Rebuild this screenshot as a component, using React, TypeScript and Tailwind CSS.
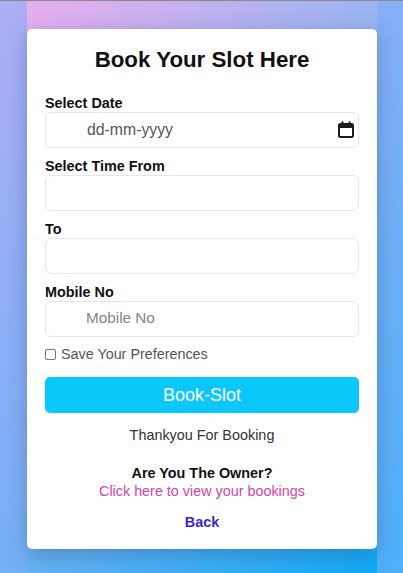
import React from "react";

const font = "font-['Liberation_Sans',Arial,sans-serif]";

const Field = ({ label, children }: { label: string; children?: React.ReactNode }) => (
  <div className="flex flex-col">
    <label className="text-[14.4px] leading-[17px] font-bold text-[#111]">{label}</label>
    <div className="flex h-[36px] items-center rounded-[6px] border border-[#e6e6e6] bg-white pb-[1px] pl-[41px] pr-[4px] text-[15.8px] text-[#555]">
      {children}
    </div>
  </div>
);

const CalendarIcon = () => (
  <svg width="16" height="17" viewBox="0 0 16 17" className="shrink-0">
    <rect x="1" y="3" width="14" height="13" rx="1.5" fill="none" stroke="#1c1c1c" strokeWidth="2" />
    <rect x="1" y="3" width="14" height="4" fill="#1c1c1c" />
    <rect x="3.5" y="0.5" width="2" height="3" fill="#1c1c1c" />
    <rect x="10.5" y="0.5" width="2" height="3" fill="#1c1c1c" />
  </svg>
);

const App: React.FC = () => {
  return (
    <div className={`${font} h-[573px] w-[403px] overflow-hidden border-t border-t-[#8a8a8a] bg-[linear-gradient(135deg,#aeaef5_0%,#4cb0f8_100%)]`}>
      <div className="ml-[27px] mr-[26px] h-full bg-[linear-gradient(135deg,#e8aeee_0%,#8eb4f2_45%,#0fabf6_100%)] pt-[28px]">
        <div className="flex h-[520px] flex-col rounded-[5px] bg-white px-[18px] shadow-[0_6px_20px_rgba(40,70,120,0.35)]">
          <h1 className="mt-[17px] mb-[21px] text-center text-[22.3px] leading-[28px] font-bold text-[#111]">Book Your Slot Here</h1>
          <div className="flex flex-col gap-[10px]">
            <Field label="Select Date">
              <span className="flex-1">dd-mm-yyyy</span>
              <CalendarIcon />
            </Field>
            <Field label="Select Time From" />
            <Field label="To" />
            <Field label="Mobile No">
              <span className="-ml-[1px] text-[15.3px] text-[#858585]">Mobile No</span>
            </Field>
          </div>
          <label className="mt-[7px] flex items-center gap-[5px] text-[14.35px] leading-[20px] text-[#555]">
            <span className="h-[11px] w-[11px] rounded-[2px] border border-[#767676]" />
            Save Your Preferences
          </label>
          <button className="mt-[13px] h-[36px] rounded-[5px] bg-[#0cc8fa] text-[18px] text-white">Book-Slot</button>
          <p className="mt-[13px] text-center text-[14.4px] leading-[18px] text-[#333]">Thankyou For Booking</p>
          <p className="mt-[21px] text-center text-[14.4px] leading-[17px] font-bold text-[#111]">Are You The Owner?</p>
          <a className="text-center text-[14.36px] leading-[18px] text-[#d63fb0]">Click here to view your bookings</a>
          <a className="mt-[13px] text-center text-[14.4px] leading-[18px] font-bold text-[#3d1fd0]">Back</a>
        </div>
      </div>
    </div>
  );
};

export default App;
